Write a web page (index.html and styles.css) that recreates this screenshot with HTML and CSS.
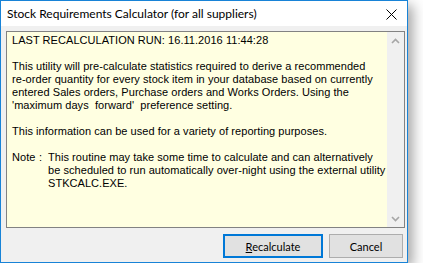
FILE: index.html
```html
<!DOCTYPE html>
<html lang="en">
<head>
    <meta charset="UTF-8">
    <title>Stock Requirements Calculator</title>
    <link rel="stylesheet" href="styles.css">
</head>
<body>
    <div class="window">
        <div class="titlebar">
            <span class="title">Stock Requirements Calculator (for all suppliers)</span>
            <svg class="close" width="11" height="11" viewBox="0 0 11 11">
                <path d="M0.5 0.5 L10.5 10.5 M10.5 0.5 L0.5 10.5" stroke="#000" stroke-width="1" fill="none"/>
            </svg>
        </div>

        <div class="content">
            <div class="memo">
                <div class="memo-text">
                    <p>LAST RECALCULATION RUN: 16.11.2016 11:44:28</p>
                    <p>This utility will pre-calculate statistics required to derive a recommended<br>re-order quantity for every stock item in your database based on currently<br>entered Sales orders, Purchase orders and Works Orders. Using the<br>'maximum days&nbsp; forward'&nbsp; preference setting.</p>
                    <p>This information can be used for a variety of reporting purposes.</p>
                    <div class="note">
                        <span class="note-label"><span>Note</span><span>:</span></span>
                        <p>This routine may take some time to calculate and can alternatively<br>be scheduled to run automatically over-night using the external utility<br>STKCALC.EXE.</p>
                    </div>
                </div>
                <div class="scrollbar">
                    <div class="arrow">
                        <svg width="9" height="6" viewBox="0 0 9 6"><path d="M1 5 L4.5 1.5 L8 5" stroke="#a6a6a6" stroke-width="1.6" fill="none"/></svg>
                    </div>
                    <div class="arrow">
                        <svg width="9" height="6" viewBox="0 0 9 6"><path d="M1 1 L4.5 4.5 L8 1" stroke="#a6a6a6" stroke-width="1.6" fill="none"/></svg>
                    </div>
                </div>
            </div>

            <div class="buttons">
                <button class="btn btn-default"><u>R</u>ecalculate</button>
                <button class="btn btn-cancel">Cancel</button>
            </div>
        </div>
    </div>
</body>
</html>
```

FILE: styles.css
```css
:root {
    --accent: #1883d7;
    --dialog-bg: #f0f0f0;
    --memo-bg: #ffffe1;
    --font-ui: Lato, 'Noto Sans', sans-serif;
    --font-memo: 'Liberation Sans', Arial, sans-serif;
}
body {
    margin: 0;
    background: #fff;
    font-family: var(--font-ui);
}
.window {
    width: 408px;
    height: 263px;
    box-sizing: border-box;
    border: 1px solid var(--accent);
    background: var(--dialog-bg);
    display: flex;
    flex-direction: column;
    box-shadow: 5px 5px 12px rgba(0,0,0,0.35);
}
.titlebar {
    height: 25px;
    flex-shrink: 0;
    background: #fff;
    display: flex;
    align-items: center;
    padding: 0 10px 0 6px;
}
.title {
    flex-grow: 1;
    font-size: 12px;
    color: #000;
}
.close {
    display: block;
    margin-top: 1px;
}
.content {
    flex-grow: 1;
    min-height: 0;
    display: flex;
    flex-direction: column;
    padding: 5px 2px 4px 5px;
    gap: 6px;
}
.memo {
    height: 197px;
    flex-shrink: 0;
    box-sizing: border-box;
    border: 1px solid #828282;
    background: var(--memo-bg);
    display: flex;
}
.memo-text {
    flex-grow: 1;
    min-width: 0;
    overflow: hidden;
    padding: 2px 0 0 5px;
    font-family: var(--font-memo);
    font-size: 11px;
    letter-spacing: 0.05px;
    line-height: 13px;
    color: #000;
    white-space: nowrap;
}
.memo-text p {
    margin: 0 0 13px;
}
.note {
    display: flex;
    gap: 6px;
}
.note-label {
    width: 30px;
    display: flex;
    justify-content: space-between;
    flex-shrink: 0;
}
.note p {
    margin: 0;
}
.scrollbar {
    width: 17px;
    flex-shrink: 0;
    background: var(--dialog-bg);
    display: flex;
    flex-direction: column;
    justify-content: space-between;
}
.arrow {
    height: 17px;
    display: flex;
    align-items: center;
    justify-content: center;
}
.arrow svg {
    display: block;
}
.buttons {
    display: flex;
    justify-content: flex-end;
    gap: 6px;
    padding-right: 2px;
}
.btn {
    height: 24px;
    box-sizing: border-box;
    background: #e1e1e1;
    border: 1px solid #adadad;
    font-family: var(--font-ui);
    font-size: 11px;
    color: #000;
    padding: 0;
}
.btn-default {
    width: 100px;
    border: 2px solid #0078d7;
}
.btn-cancel {
    width: 74px;
}
```
